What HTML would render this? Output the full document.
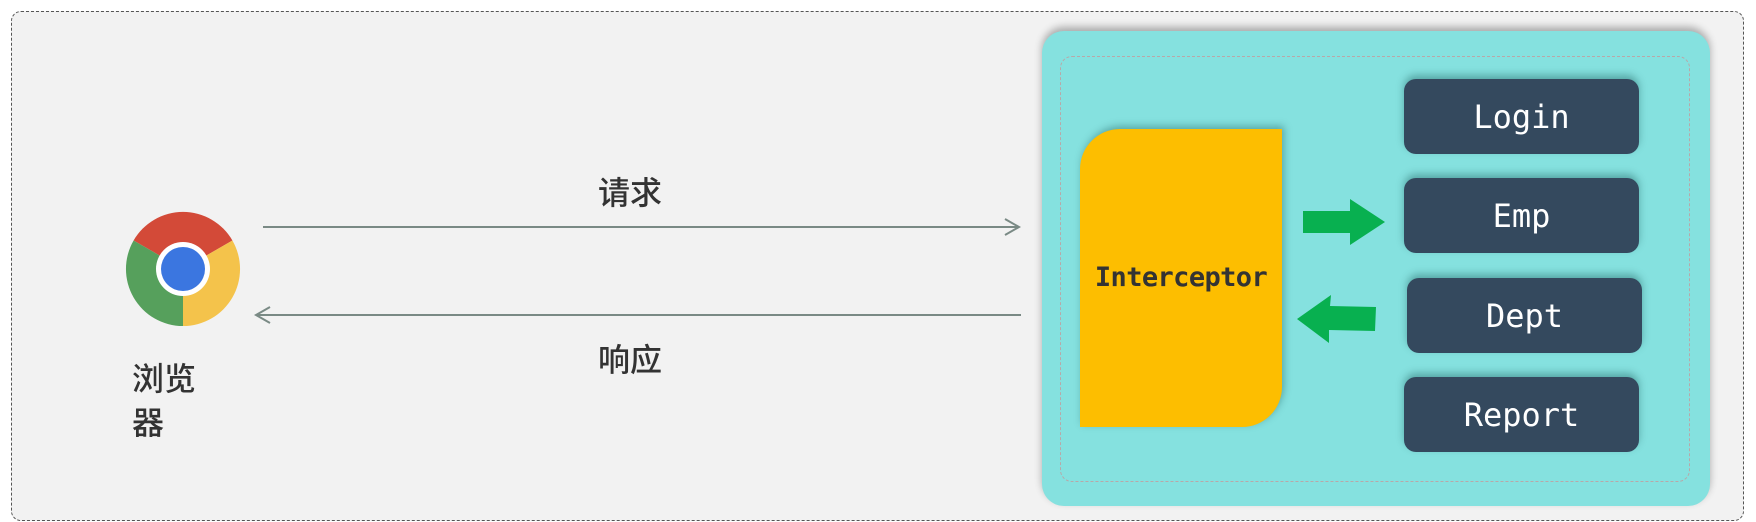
<!DOCTYPE html>
<html><head><meta charset="utf-8"><style>
*{margin:0;padding:0;box-sizing:border-box}
body{width:1756px;height:522px;background:#fff;position:relative;overflow:hidden;font-family:"Liberation Sans","Noto Sans CJK SC",sans-serif}
.outer{position:absolute;left:11px;top:11px;width:1733px;height:510px;border:1px dashed #555;border-radius:10px;background:#f2f2f2}
.teal{position:absolute;left:1042px;top:31px;width:668px;height:475px;background:#85e1df;border-radius:22px;box-shadow:0 -4px 8px rgba(0,0,0,.3)}
.inner{position:absolute;left:1060px;top:56px;width:630px;height:426px;border:1px dashed #b8a8a8;border-radius:12px}
.yel{position:absolute;left:1080px;top:129px;width:202px;height:298px;background:#fdbe00;border-radius:40px 0 40px 0;box-shadow:2px -3px 8px rgba(0,60,60,.35);display:flex;align-items:center;justify-content:center;font:bold 27px "DejaVu Sans Mono",monospace;color:#333;padding-bottom:2px;letter-spacing:-0.6px}
.b{position:absolute;left:1404px;width:235px;height:75px;background:#34495e;border-radius:12px;color:#fff;font:32px "DejaVu Sans Mono",monospace;display:flex;align-items:center;justify-content:center;box-shadow:0 -4px 8px rgba(0,60,60,.35)}
.t{position:absolute;font-size:32px;color:#333;font-family:"Noto Sans CJK SC",sans-serif;font-weight:500}
</style></head><body>
<div class="outer"></div>
<div class="teal"></div>
<div class="inner"></div>
<div class="yel">Interceptor</div>
<div class="b" style="top:79px">Login</div>
<div class="b" style="top:178px">Emp</div>
<div class="b" style="top:278px;left:1407px">Dept</div>
<div class="b" style="top:377px">Report</div>
<svg width="1756" height="522" style="position:absolute;left:0;top:0">
<line x1="263" y1="227" x2="1019" y2="227" stroke="#7a8a85" stroke-width="2"/>
<polyline points="1005,219 1019,227 1005,235" fill="none" stroke="#7a8a85" stroke-width="2"/>
<line x1="256" y1="315" x2="1021" y2="315" stroke="#7a8a85" stroke-width="2"/>
<polyline points="270,307 256,315 270,323" fill="none" stroke="#7a8a85" stroke-width="2"/>
<polygon points="1303,211 1350,211 1350,199 1385,222 1350,245 1350,233 1303,233" fill="#08b050"/>
<polygon points="1376,307 1330,306 1331,295 1297,319 1329,343 1329,330 1375,331" fill="#08b050"/>
<g transform="translate(183,269)">
<path d="M0,0 L-49.4,-28.5 A57,57 0 0 1 49.4,-28.5 Z" fill="#d34a38"/>
<path d="M0,0 L49.4,-28.5 A57,57 0 0 1 0,57 Z" fill="#f4c34b"/>
<path d="M0,0 L0,57 A57,57 0 0 1 -49.4,-28.5 Z" fill="#56a05c"/>
<circle r="27" fill="#fff"/>
<circle r="22" fill="#3b76e0"/>
</g>
</svg>
<div class="t" style="left:598px;top:168px">请求</div>
<div class="t" style="left:598px;top:335px">响应</div>
<div class="t" style="left:132px;top:354px">浏览</div>
<div class="t" style="left:132px;top:398px">器</div>
</body></html>
